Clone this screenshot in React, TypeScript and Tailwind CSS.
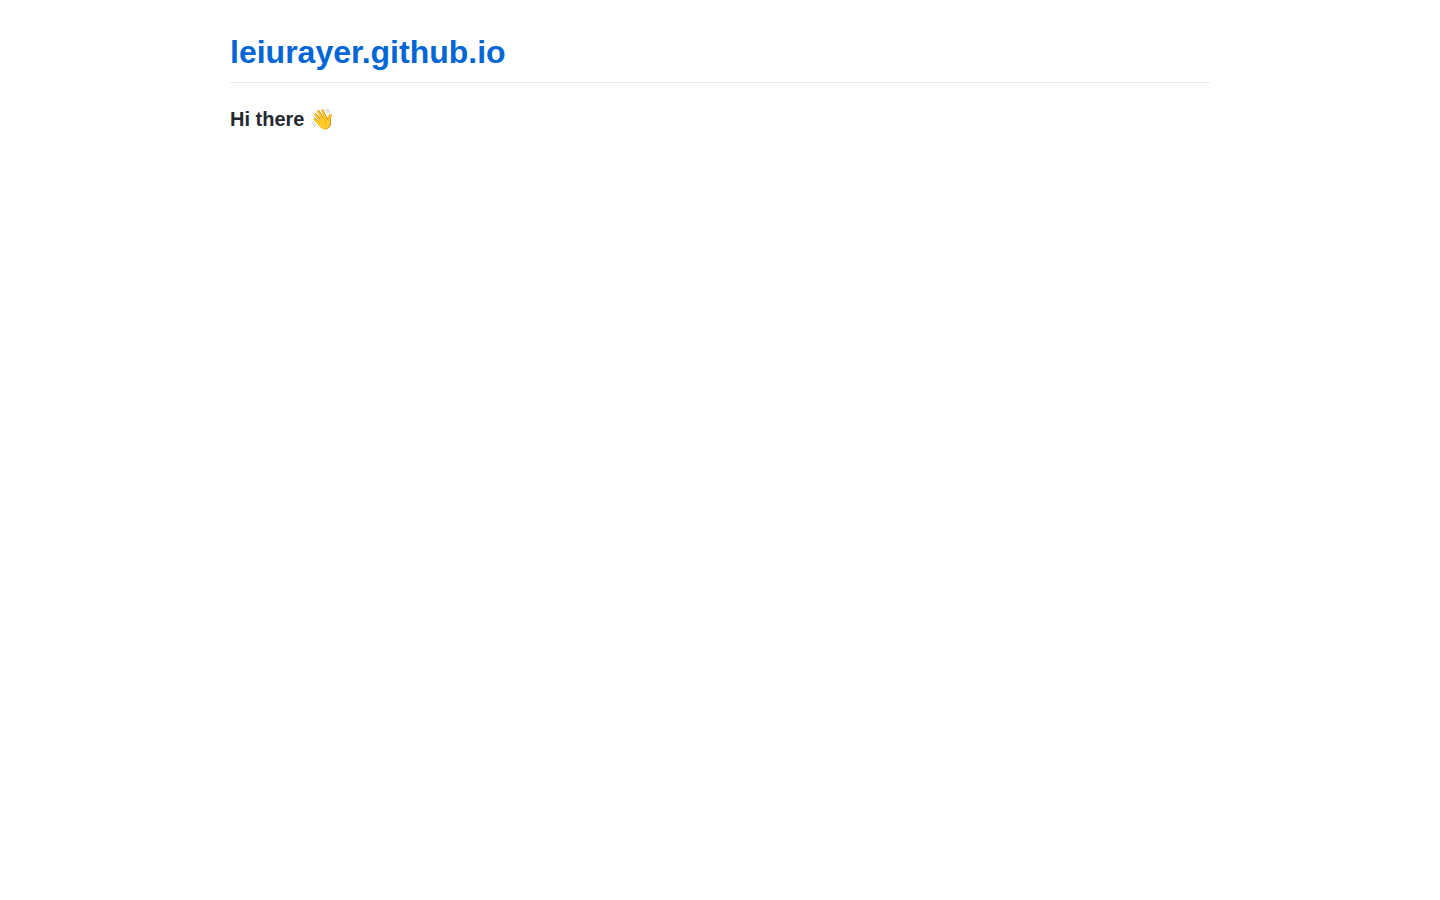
export default function App() {
  return (
    <main className="mx-auto max-w-[1044px] px-8 pt-8 font-['Liberation_Sans',Arial,sans-serif] text-[#24292e]">
      <h1 className="border-b border-[#eaecef] pb-2.5 text-[32px] leading-10 font-semibold">
        <a href="/" className="text-[#0366d6] hover:underline">
          leiurayer.github.io
        </a>
      </h1>
      <h3 className="mt-6 mb-4 text-xl leading-[25px] font-semibold">Hi there 👋</h3>
    </main>
  );
}
